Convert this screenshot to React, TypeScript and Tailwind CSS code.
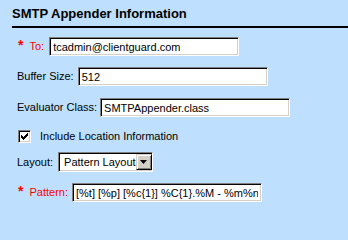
const inset =
  "box-border h-[19px] w-[190px] border border-t-[#808080] border-l-[#808080] border-r-white border-b-white bg-white shadow-[inset_1px_1px_0_#000,inset_-1px_-1px_0_#d4d0c8] px-[3px] text-[11px] leading-[17px] text-black outline-none";

function Required({ label }: { label: string }) {
  return (
    <span className="flex items-center whitespace-nowrap text-[#ff0000]">
      <span className="relative top-[-2px] ml-[1px] mr-[6px] text-[14px] font-bold leading-none">*</span>
      {label}
    </span>
  );
}

export default function App() {
  return (
    <div
      className="min-h-screen w-full bg-[#bee0fe] text-[11px] text-black"
      style={{ fontFamily: '"Liberation Sans", Arial, sans-serif' }}
    >
      {/* Header */}
      <div className="pl-[12px] pt-[6px] text-[13px] font-bold leading-[15px]">
        SMTP Appender Information
      </div>
      <div className="ml-[12px] mt-[5px] h-[2px] bg-black" />

      <div className="flex flex-col pl-[17px]">
        {/* To */}
        <div className="mt-[9px] flex h-[19px] items-center gap-[5px]">
          <Required label="To:" />
          <input className={inset} defaultValue="tcadmin@clientguard.com" readOnly />
        </div>

        {/* Buffer size */}
        <div className="mt-[11px] flex h-[19px] items-center gap-[4px]">
          <span className="whitespace-nowrap">Buffer Size:</span>
          <input className={inset} defaultValue="512" readOnly />
        </div>

        {/* Evaluator class */}
        <div className="mt-[12px] flex h-[19px] items-center gap-[3px]">
          <span className="whitespace-nowrap">Evaluator Class:</span>
          <input className={inset} defaultValue="SMTPAppender.class" readOnly />
        </div>

        {/* Checkbox */}
        <div className="mt-[10px] flex h-[19px] items-center gap-[9px]">
          <span className="ml-[1px] box-border flex h-[13px] w-[13px] items-center justify-center border border-t-[#808080] border-l-[#808080] border-r-white border-b-white bg-white shadow-[inset_1px_1px_0_#000,inset_-1px_-1px_0_#d4d0c8]">
            <svg width="7" height="7" viewBox="0 0 7 7">
              <path d="M0 2h1v1h1v1h1V3h1V2h1V1h1V0h1v3H6v1H5v1H4v1H3v1H2V6H1V5H0z" fill="#000" />
            </svg>
          </span>
          <span className="whitespace-nowrap">Include Location Information</span>
        </div>

        {/* Layout */}
        <div className="mt-[6px] flex h-[20px] items-center gap-[5px]">
          <span className="whitespace-nowrap">Layout:</span>
          <div className="box-border flex h-[20px] w-[95px] shrink-0 items-center border border-t-[#808080] border-l-[#808080] border-r-white border-b-white bg-white shadow-[inset_1px_1px_0_#000,inset_-1px_-1px_0_#d4d0c8] p-[2px]">
            <span className="flex-1 whitespace-nowrap pl-[3px] text-[11px] leading-none">Pattern Layout</span>
            <span className="box-border flex h-[16px] w-[16px] shrink-0 items-center justify-center border border-t-[#d4d0c8] border-l-[#d4d0c8] border-r-black border-b-black bg-[#d4d0c8] shadow-[inset_1px_1px_0_#fff,inset_-1px_-1px_0_#808080]">
              <svg width="7" height="4" viewBox="0 0 7 4">
                <path d="M0 0h7L3.5 4z" fill="#000" />
              </svg>
            </span>
          </div>
        </div>

        {/* Pattern */}
        <div className="mt-[11px] flex h-[19px] items-center gap-[4px]">
          <Required label="Pattern:" />
          <input className={inset} defaultValue="[%t] [%p] [%c{1}] %C{1}.%M - %m%n" readOnly />
        </div>
      </div>
    </div>
  );
}
